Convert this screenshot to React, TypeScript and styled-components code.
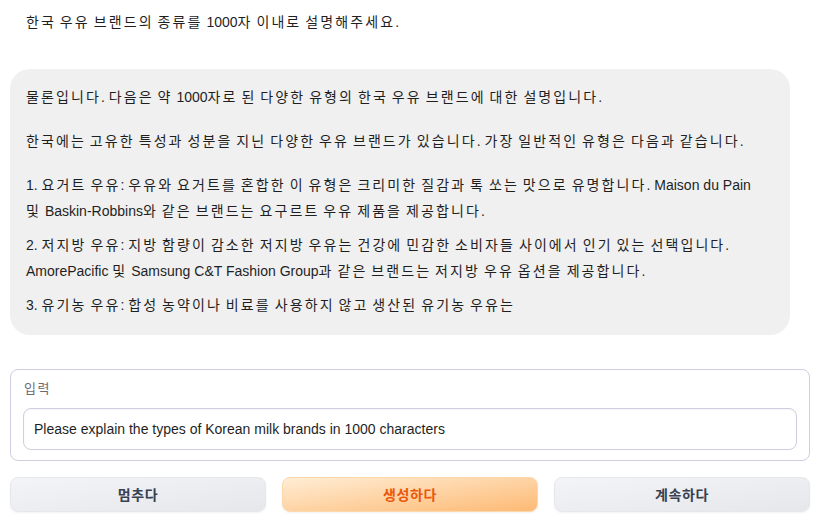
import React from "react";
import styled, { createGlobalStyle } from "styled-components";

const Global = createGlobalStyle`
  html, body { margin: 0; padding: 0; background: #ffffff; }
  body {
    font-family: "Liberation Sans", Arial, "Noto Sans CJK KR", sans-serif;
    color: #1f1f1f;
  }
  * { box-sizing: border-box; }
`;

/* Hangul runs are set wider, as the reference's Korean face is wider than Noto CJK's */
const Hangul = styled.span<{ $ls?: number }>`
  font-family: "Noto Sans CJK KR", sans-serif;
  line-height: 1;
  letter-spacing: ${(p) => p.$ls ?? 2.1}px;
`;

function K({ text, ls }: { text: string; ls?: number }) {
  const parts = text.split(/([\uAC00-\uD7A3\u3131-\u318E]+)/);
  const out: React.ReactNode[] = [];
  parts.forEach((part, i) => {
    if (!part) return;
    if (i % 2 === 1) {
      out.push(
        <Hangul key={`h${i}`} $ls={ls}>
          {part}
        </Hangul>
      );
    } else {
      // keep latin runs as separate word-sized text nodes
      part.split(/(?<=\s)/).forEach((w, j) => {
        if (w) out.push(<React.Fragment key={`t${i}-${j}`}>{w}</React.Fragment>);
      });
    }
  });
  return <>{out}</>;
}

const Page = styled.div`
  width: 817px;
  height: 520px;
  padding: 9px 7px 0 10px;
  display: flex;
  flex-direction: column;
`;

const UserMessage = styled.div`
  padding: 0 16px;
  font-size: 14px;
  line-height: 26px;
`;

const BotBubble = styled.div`
  margin-top: 34px;
  width: 780px;
  background: #f0f0f0;
  border-radius: 20px;
  padding: 15px 26px 17px 16px;
  font-size: 14px;
  line-height: 26px;
`;

const Para = styled.p<{ $gap?: number }>`
  margin: 0 0 ${(p) => p.$gap ?? 18}px;
  &:last-child { margin-bottom: 0; }
`;

const InputBlock = styled.div`
  margin-top: 34px;
  border: 1px solid #cfcddf;
  border-radius: 8px;
  padding: 9px 12px 10px;
  display: flex;
  flex-direction: column;
  gap: 9px;
`;

const Label = styled.span`
  font-size: 13px;
  line-height: 20px;
  color: #6b6b78;
  padding-left: 1px;
`;

const TextBox = styled.div`
  height: 42px;
  border: 1px solid #cfcddf;
  border-radius: 8px;
  padding: 0 10px;
  display: flex;
  align-items: center;
  font-size: 14px;
  color: #1f1f1f;
  box-shadow: inset 0 1px 2px rgba(0, 0, 0, 0.04);
`;

const ButtonRow = styled.div`
  margin-top: 16px;
  display: grid;
  grid-template-columns: repeat(3, 1fr);
  gap: 16px;
`;

const Button = styled.button<{ $primary?: boolean }>`
  height: 35px;
  border-radius: 8px;
  font-family: "Liberation Sans", Arial, "Noto Sans CJK KR", sans-serif;
  font-size: 14px;
  font-weight: 600;
  cursor: pointer;
  border: 1px solid ${(p) => (p.$primary ? "#fed7aa" : "#e5e7eb")};
  color: ${(p) => (p.$primary ? "#ea580c" : "#374151")};
  background: ${(p) =>
    p.$primary
      ? "linear-gradient(to bottom right, #ffedd5, #fdba74)"
      : "linear-gradient(to bottom right, #f3f4f6, #e5e7eb)"};
  box-shadow: 0 1px 2px rgba(0, 0, 0, 0.05);
`;

const answer = [
  { t: "물론입니다. 다음은 약 1000자로 된 다양한 유형의 한국 우유 브랜드에 대한 설명입니다.", g: 18 },
  { t: "한국에는 고유한 특성과 성분을 지닌 다양한 우유 브랜드가 있습니다. 가장 일반적인 유형은 다음과 같습니다.", g: 18 },
  {
    t: "1. 요거트 우유: 우유와 요거트를 혼합한 이 유형은 크리미한 질감과 톡 쏘는 맛으로 유명합니다. Maison du Pain 및 Baskin-Robbins와 같은 브랜드는 요구르트 우유 제품을 제공합니다.",
    g: 8,
  },
  {
    t: "2. 저지방 우유: 지방 함량이 감소한 저지방 우유는 건강에 민감한 소비자들 사이에서 인기 있는 선택입니다. AmorePacific 및 Samsung C&T Fashion Group과 같은 브랜드는 저지방 우유 옵션을 제공합니다.",
    g: 8,
  },
  { t: "3. 유기농 우유: 합성 농약이나 비료를 사용하지 않고 생산된 유기농 우유는", g: 0 },
];

export default function App() {
  return (
    <>
      <Global />
      <Page>
        <UserMessage>
          <K text="한국 우유 브랜드의 종류를 1000자 이내로 설명해주세요." />
        </UserMessage>
        <BotBubble>
          {answer.map((a, i) => (
            <Para key={i} $gap={a.g}>
              <K text={a.t} />
            </Para>
          ))}
        </BotBubble>
        <InputBlock>
          <Label>
            <K text="입력" ls={1.6} />
          </Label>
          <TextBox>Please explain the types of Korean milk brands in 1000 characters</TextBox>
        </InputBlock>
        <ButtonRow>
          <Button>
            <K text="멈추다" ls={0.6} />
          </Button>
          <Button $primary>
            <K text="생성하다" ls={0.6} />
          </Button>
          <Button>
            <K text="계속하다" ls={0.6} />
          </Button>
        </ButtonRow>
      </Page>
    </>
  );
}
